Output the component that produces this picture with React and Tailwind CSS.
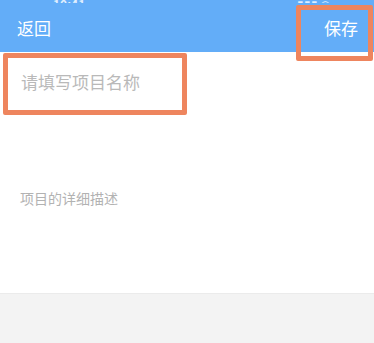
export default function App() {
  return (
    <div
      className="relative h-[343px] w-[374px] overflow-hidden bg-white"
      style={{ fontFamily: '"Noto Sans CJK SC", "Liberation Sans", sans-serif' }}
    >
      {/* header */}
      <div className="flex h-[52px] flex-col bg-[#63adf8]">
        <div className="flex h-[3px] items-end justify-between overflow-hidden pl-[53px] pr-[30px]">
          <span className="translate-y-[7px] text-[12px] font-semibold leading-none text-white/80">10:41</span>
          <span className="translate-y-[7px] text-[12px] leading-none text-white/80">▮▮▮ ◠ ▭</span>
        </div>
        <div className="flex flex-1 items-center justify-between pl-[17px] pr-[16px] pb-[1px]">
          <span className="text-[17px] leading-none text-white">返回</span>
          <span className="text-[17px] leading-none text-white">保存</span>
        </div>
      </div>

      {/* name field */}
      <div className="flex h-[60px] items-center pl-[21px] pb-[2px]">
        <span className="text-[17px] leading-none text-[#b9b9b9]">请填写项目名称</span>
      </div>

      {/* description */}
      <div className="h-[181px] pl-[20px] pt-[79px]">
        <span className="block text-[14px] leading-none text-[#b2b2b2]">项目的详细描述</span>
      </div>

      <div className="h-[51px] border-t border-[#ebebeb] bg-[#f3f3f3]" />

      {/* annotation boxes */}
      <div className="absolute left-[296px] top-[5px] h-[56px] w-[77px] rounded-[2px] border-[5px] border-[#ee855e]" />
      <div className="absolute left-[3px] top-[53px] h-[62px] w-[184px] rounded-[2px] border-[5px] border-[#ee855e]" />
    </div>
  )
}
